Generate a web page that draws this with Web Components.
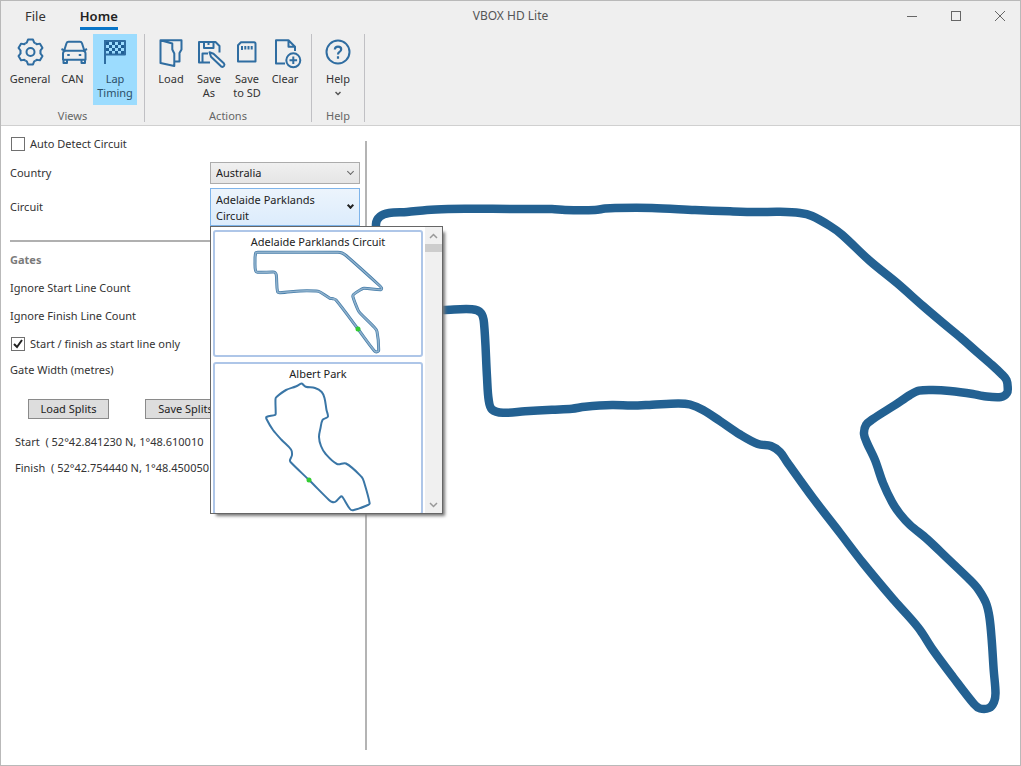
<!DOCTYPE html>
<html lang="en">
<head>
<meta charset="utf-8">
<title>VBOX HD Lite</title>
<style>
  html, body { margin: 0; height: 100%; }
  body { font: 11px/16px "Noto Sans", "Open Sans", sans-serif; color: #333; background: #fff; }
</style>
</head>
<body>
<app-window>
  <title-bar slot="top" heading="VBOX HD Lite"></title-bar>
  <ribbon-bar slot="top">
    <ribbon-group caption="Views">
      <ribbon-button class="wide" icon="gear">General</ribbon-button>
      <ribbon-button class="mid" icon="car">CAN</ribbon-button>
      <ribbon-button class="wide" icon="flag" active>Lap Timing</ribbon-button>
    </ribbon-group>
    <ribbon-group caption="Actions">
      <ribbon-button icon="load">Load</ribbon-button>
      <ribbon-button icon="saveas">Save As</ribbon-button>
      <ribbon-button icon="sd">Save to&nbsp;SD</ribbon-button>
      <ribbon-button icon="clear">Clear</ribbon-button>
    </ribbon-group>
    <ribbon-group caption="Help">
      <ribbon-button icon="help" menu>Help</ribbon-button>
    </ribbon-group>
  </ribbon-bar>
  <lap-settings slot="side"></lap-settings>
  <track-map slot="main"></track-map>
</app-window>

<script>
const define = (name, html, setup) => customElements.define(name, class extends HTMLElement {
  connectedCallback() {
    if (this.shadowRoot) return;
    const root = this.attachShadow({ mode: "open" });
    const t = document.createElement("template");
    t.innerHTML = typeof html === "function" ? html(this) : html;
    root.append(t.content.cloneNode(true));
    if (setup) setup(this, root);
  }
});

/* Smooth line through a list of points; each handle is a third of its own segment. */
function smooth(text, closed) {
  const p = text.trim().split(/\s+/).map(s => s.split(",").map(Number));
  const n = p.length;
  const at = i => closed ? p[(i + n) % n] : p[Math.max(0, Math.min(n - 1, i))];
  const dir = i => {
    const a = at(i - 1), b = at(i + 1), l = Math.hypot(b[0] - a[0], b[1] - a[1]) || 1;
    return [(b[0] - a[0]) / l, (b[1] - a[1]) / l];
  };
  let d = "M" + p[0];
  for (let i = 0; i < (closed ? n : n - 1); i++) {
    const a = at(i), b = at(i + 1), u = dir(i), v = dir(i + 1);
    const h = Math.hypot(b[0] - a[0], b[1] - a[1]) / 3;
    d += `C${a[0] + u[0] * h},${a[1] + u[1] * h} ${b[0] - v[0] * h},${b[1] - v[1] * h} ${b}`;
  }
  return d + (closed ? "Z" : "");
}

const ADELAIDE = `376,224 380,216.500 389,213 407,212 427,210 448,209 465,208.700 512,209 552,209 565,210 595,210 605,208.600 615,208
 652,208 695,210 730,211.300 757,212 780,211.800 800,213 812,216 830,226 842,234.700 870,261 897,283 923,306 943,323 960,337
 977,352 992,365 1002,374.500 1006.500,380 1007.700,387 1007,393 1001,397 983,396 973,394 950,391 933,390 919,390.700 910,395 895,405
 873,419 866,425 864,434 867,443 875,460 883,483 892,502 900,514 910,525 927,539 947,558 970,580 978,589 986,603
 989.400,617 991.700,640 993.700,670 995.500,693 994,702 989,708 980,708.500 974,704 953,677 933,650 920,630 907,614.500 893,599 863,563 840,533
 813,498 787,462 780,452 771,446 758,444 740,434.500 720,421 703,410 690,404.500 678,403.400 652,404.700 632,405.600 612,405
 585,406.700 572,408.700 552,409.700 525,411.300 503,412.800 492,409.500 488.700,400 487,377 484,323 481,313 472,309.300 443,310 388,310 379,304 376,290`;

define("app-window", `
<style>
  :host { display: flex; flex-direction: column; box-sizing: border-box; min-height: 100vh; border: 1px solid #b9b9b9; }
  header { background: #efefef; border-bottom: 1px solid #d0d0d0; }
  main { flex: 1; display: flex; }
  .side { flex: none; width: 364px; position: relative; z-index: 1; }
  .rule { flex: none; width: 2px; background: #b4b4b4; margin: 15px 0; }
  .map { flex: 1; min-width: 0; }
</style>
<header><slot name="top"></slot></header>
<main><div class="side"><slot name="side"></slot></div><div class="rule"></div><div class="map"><slot name="main"></slot></div></main>`);

define("title-bar", el => `
<style>
  :host { display: grid; grid-template-columns: 1fr auto 1fr; height: 32px; }
  nav { display: flex; gap: 34px; padding-left: 24px; }
  a { color: #333; text-decoration: none; font-size: 13px; line-height: 24px; padding-top: 3px; height: 23px; }
  a.on { color: #222; font-weight: 600; border-bottom: 3px solid #0a76c8; }
  h1 { margin: 0; font-size: 12px; font-weight: 400; line-height: 30px; color: #555; }
  .ctl { display: flex; justify-content: flex-end; gap: 4px; }
  button { border: 0; background: none; width: 40px; height: 30px; padding: 0; display: grid; place-items: center; }
  svg { width: 12px; height: 12px; fill: none; stroke: #666; }
</style>
<nav><a href="#file">File</a><a class="on" href="#home">Home</a></nav>
<h1>${el.getAttribute("heading")}</h1>
<div class="ctl">
  <button aria-label="Minimize"><svg><path d="M1 6.500H11"/></svg></button>
  <button aria-label="Maximize"><svg><rect x="1.500" y="1.500" width="9" height="9"/></svg></button>
  <button aria-label="Close"><svg><path d="M1 1L11 11M11 1L1 11"/></svg></button>
</div>`);

define("ribbon-bar", `
<style>:host { display: flex; padding: 1px 0 3px; }</style><slot></slot>`);

define("ribbon-group", el => `
<style>
  :host { display: flex; flex-direction: column; justify-content: space-between; height: 88px; padding: 0 7px; border-right: 1px solid #c0c0c4; }
  .row { display: flex; }
  .cap { text-align: center; font-size: 11px; line-height: 12px; color: #666; }
</style>
<div class="row"><slot></slot></div><div class="cap">${el.getAttribute("caption")}</div>`);

const tooth = '<path d="M-5.100 -8.700L-3.700 -9.300L-2.500 -12.400H2.500L3.700 -9.300L5.100 -8.700"/>';
const ICONS = {
  gear: `<g transform="translate(15.500 14)">${[0, 60, 120, 180, 240, 300].map(a => `<g transform="rotate(${a})">${tooth}</g>`).join("")}<circle r="4"/></g>`,
  car: `<path d="M6.200 12.500L8.500 5.200Q9 3.700 10.500 3.700H22Q23.500 3.700 24 5.200L26.300 12.500M5 21.700V15.500Q5 12.700 7.800 12.700H24.700Q27.500 12.700 27.500 15.500V21.700ZM5.500 22V25H9V22M23.500 22V25H27V22M3.500 11L6 12.300M29 11L26.500 12.300"/><path d="M10.500 16V18M22 16V18" stroke-width="2.500"/>`,
  flag: `<path d="M5 2V26M5 3H25V16.500H5"/><path stroke="none" fill="#1f5f94" d="${[0,1,2,3].flatMap(r => [0,1,2,3,4,5].filter(c => (r + c) % 2 === 0).map(c => `M${6 + c * 3} ${4 + r * 3}h3v3h-3z`)).join("")}"/>`,
  load: `<path d="M4.500 2.300H25.500V11.500L23.500 15V23.500H18.500M4.500 2.300L16.300 5.500V11.500L18.300 15.500V28L4.500 25Z"/>`,
  saveas: `<path d="M16 24.500H5V4H21.500L25.500 8V14.500M10 4.500V10H19.500V4.500M14.500 4.500V7M8.500 24V15.500H14"/><path d="M15.500 14.300L17 18.800L27 28.300Q28.800 29.500 30 28Q31 26.500 29.800 25.300L19.500 15.700Z"/>`,
  sd: `<path d="M9 4.300H22Q23.500 4.300 23.500 5.800V23.500H6V7.300Z"/><path d="M10 8V12M13.300 8V11.500M16.500 8V11.500M19.700 8V11.500"/>`,
  clear: `<path d="M15 25.500H6V2.300H18.500L25 8.800V13M18.500 2.300V8.800H25"/><circle cx="23.300" cy="22.300" r="7"/><path d="M19.500 22.300H27.100M23.300 18.500V26.100"/>`,
  help: `<circle cx="15" cy="14" r="11.500"/><path stroke-width="2.200" d="M11.800 11.500Q12 8.700 15 8.700Q18.200 8.700 18.200 11.300Q18.200 12.900 16.500 13.900Q15 14.900 15 16.500M15 18.300V20.700"/>`
};

define("ribbon-button", el => `
<style>
  :host { display: block; width: 38px; }
  :host(.wide) { width: 44px; }
  :host(.mid) { width: 41px; }
  button { display: flex; flex-direction: column; align-items: center; gap: 4px; width: 100%; height: 71px; padding: 4px 0 0; border: 0; background: none; font: inherit; line-height: 14px; color: #333; }
  :host([active]) button { background: #9cdcfe; color: #2c4f68; }
  .icon { width: 30px; height: 30px; overflow: visible; fill: none; stroke: #2f6da1; stroke-width: 2; stroke-linejoin: round; }
  .chev { display: block; margin: 5px auto 0; width: 6px; height: 5px; fill: none; stroke: #555; stroke-width: 1.500; }
</style>
<button><svg class="icon" viewBox="0 0 30 30" aria-hidden="true">${ICONS[el.getAttribute("icon")]}</svg><span><slot></slot>${el.hasAttribute("menu") ? '<svg class="chev" viewBox="0 0 6 5"><path d="M0.500 1L3 3.500L5.500 1"/></svg>' : ""}</span></button>`);

define("check-row", el => `
<style>
  :host { display: block; }
  label { display: flex; align-items: center; gap: 5px; line-height: 16px; }
  input { appearance: none; flex: none; width: 14px; height: 14px; margin: 0 0 0 1px; border: 1px solid #707070; background: #fff; }
  input:checked { background: #fff url('data:image/svg+xml,<svg xmlns="http://www.w3.org/2000/svg" viewBox="0 0 12 12"><path d="M2 6L5 9L10 2" fill="none" stroke="%23222" stroke-width="2"/></svg>'); }
</style>
<label><input type="checkbox" ${el.hasAttribute("checked") ? "checked" : ""}><span><slot></slot></span></label>`);

define("circuit-card", el => `
<style>
  :host { display: block; border: 2px solid #aec6e8; border-radius: 3px; padding-top: 2px; background: #fff; text-align: center; color: #222; }
  svg { display: block; width: 100%; fill: none; stroke-linejoin: round; }
</style>
<div><slot></slot></div>
<svg viewBox="${el.getAttribute("view")}" aria-hidden="true">
  ${el.hasAttribute("double")
    ? `<path d="${smooth(el.getAttribute("points"), true)}" stroke="#447ca9" stroke-width="3"/><path d="${smooth(el.getAttribute("points"), true)}" stroke="#8fb1cc" stroke-width="1.600"/>`
    : `<path d="${smooth(el.getAttribute("points"), true)}" stroke="#3a76a6" stroke-width="2"/>`}
  <circle cx="${el.getAttribute("dot").split(",")[0]}" cy="${el.getAttribute("dot").split(",")[1]}" r="2.500" fill="#33cc33"/>
</svg>`);

define("circuit-popup", `
<style>
  :host { display: flex; box-sizing: border-box; width: 233px; height: 288px; padding-left: 2px; gap: 2px; border: 1px solid #666; background: #fff; box-shadow: 4px 4px 3px -2px #777; overflow: hidden; }
  .list { flex: 1; display: flex; flex-direction: column; gap: 5px; padding-top: 3px; overflow: hidden; }
  circuit-card { flex: none; }
  .bar { width: 17px; display: flex; flex-direction: column; background: #f0f0f0; }
  .thumb { height: 8px; background: #cdcdcd; }
  .bar button { border: 0; padding: 0; background: none; height: 17px; display: grid; place-items: center; }
  .bar button:last-child { margin-top: auto; }
  svg { width: 9px; height: 6px; fill: none; stroke: #999; stroke-width: 1.500; }
</style>
<div class="list" role="listbox" aria-label="Circuits">
  <circuit-card role="option" aria-selected="true" double view="215 250 206 105" dot="358,329" points="255.700,253 258,252.300 338,252.300 342,253 346,255.500 380,286 381.500,288 381,289.700 364,288.300 361,289.500 353.500,294.500 353,297 358,310 360,313 374,327 377,331.500 378.700,350 377,351.800 374.500,351 358,329 336,300 333,298.700 330,298.300 319,291.500 316,291 300,291 280,292.700 277.500,291.500 276.300,275 275,272.500 273,272 257.500,272.200 255.500,270.500 255,262">Adelaide Parklands Circuit</circuit-card>
  <circuit-card role="option" aria-selected="false" view="215 382 206 131" dot="309,480" points="302,383.700 305.700,386.700 315,388 321.700,392 324.500,398 326.500,410 328,416.500 326,418 322.500,420 320.500,428 319,437 321,446 325.700,454 337,464 346,463.500 361.700,477 364,482 369.700,503.500 368,505 353,510.300 350,509 342.500,497 341,496.300 335,502 331.500,501.800 329,500 309,480 290.500,462 290,460 292,455 291,449.500 281.700,440 273,430 266.500,419 266.500,417 275.300,414.800 275.700,413 275.500,399 276.500,397 286,390 295.700,386.500 301,383.700">Albert Park</circuit-card>
</div>
<div class="bar">
  <button aria-label="Scroll up"><svg viewBox="0 0 9 6"><path d="M1 5L4.500 1.500L8 5"/></svg></button>
  <div class="thumb"></div>
  <button aria-label="Scroll down"><svg viewBox="0 0 9 6"><path d="M1 1L4.500 4.500L8 1"/></svg></button>
</div>`);

define("lap-settings", `
<style>
  :host { display: flex; flex-direction: column; padding: 10px 5px 0 9px; }
  .field { display: grid; grid-template-columns: 1fr 150px; align-items: center; }
  .country { margin-top: 10px; }
  .circuit { margin-top: 4px; }
  .drop { position: relative; }
  .drop::after { content: ""; position: absolute; right: 7px; top: 50%; width: 4px; height: 4px; margin-top: -4px; border: solid #666; border-width: 0 1px 1px 0; transform: rotate(45deg); pointer-events: none; }
  .circuit .drop::after { width: 3px; height: 3px; border-color: #222; border-width: 0 2px 2px 0; }
  select { appearance: none; display: block; box-sizing: border-box; width: 150px; height: 22px; margin: 0; padding: 0 24px 0 5px; border: 1px solid #acacac; border-radius: 0; background: linear-gradient(#f0f0f0, #e5e5e5); font: inherit; color: #222; }
  .circuit select { height: 38px; padding: 3px 24px 1px 5px; white-space: normal; line-height: 16px; border-color: #7eb4ea; background: linear-gradient(#ecf4fc, #dcecfc); }
  circuit-popup { position: absolute; left: 0; top: 100%; z-index: 5; }
  hr { width: 100%; height: 2px; margin: 14px 0 0; border: 0; background: #b0b0b0; }
  h2 { margin: 10px 0 0; font-size: 11px; line-height: 16px; color: #7a7a7a; }
  p { margin: 12px 0 0; }
  check-row.mid { margin-top: 12px; }
  .gate { margin-top: 10px; }
  .btns { display: flex; gap: 36px; margin: 21px 0 15px 18px; }
  .btns button { box-sizing: border-box; width: 81px; height: 20px; padding: 0; border: 1px solid #8a8a8a; background: #ddd; font: inherit; line-height: 16px; color: #222; }
  .pos { margin: 0 0 10px 5px; white-space: pre; }
</style>
<check-row>Auto Detect Circuit</check-row>
<div class="field country"><label for="country">Country</label><div class="drop"><select id="country"><option>Australia</option></select></div></div>
<div class="field circuit"><label for="circuit">Circuit</label><div class="drop"><select id="circuit"><option>Adelaide Parklands Circuit</option><option>Albert Park</option></select><circuit-popup></circuit-popup></div></div>
<hr>
<h2>Gates</h2>
<p>Ignore Start Line Count</p>
<p>Ignore Finish Line Count</p>
<check-row class="mid" checked>Start / finish as start line only</check-row>
<p class="gate">Gate Width (metres)</p>
<div class="btns"><button>Load Splits</button><button>Save Splits</button></div>
<p class="pos">Start  ( 52°42.841230 N, 1°48.610010</p>
<p class="pos">Finish  ( 52°42.754440 N, 1°48.450050</p>`);

define("track-map", `
<style>
  :host { display: block; }
  svg { display: block; width: 100%; fill: none; stroke: #236192; stroke-width: 8.500; }
</style>
<svg viewBox="367 126 653 639" role="img" aria-label="Adelaide Parklands Circuit"><path d="${smooth(ADELAIDE, true)}"/></svg>`);
</script>
</body>
</html>
